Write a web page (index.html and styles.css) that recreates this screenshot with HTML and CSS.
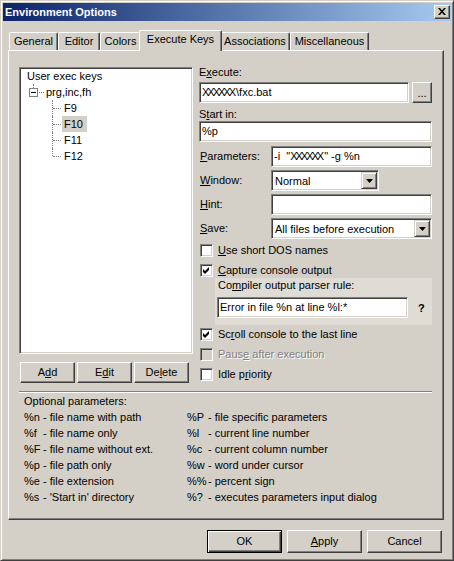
FILE: index.html
```html
<!DOCTYPE html>
<html>
<head>
<meta charset="utf-8">
<link rel="stylesheet" href="styles.css">
</head>
<body>
<div class="window">
  <div class="titlebar">
    <span class="title">Environment Options</span>
    <span class="close"><svg width="8" height="7" viewBox="0 0 8 7"><polygon points="0,0 2,0 8,7 6,7" fill="#000"/><polygon points="6,0 8,0 2,7 0,7" fill="#000"/></svg></span>
  </div>
  <div class="main">
    <div class="tabs">
      <div class="tab t-general">General</div>
      <div class="tab t-editor">Editor</div>
      <div class="tab t-colors">Colors</div>
      <div class="tab t-exec active">Execute Keys</div>
      <div class="tab t-assoc">Associations</div>
      <div class="tab t-misc">Miscellaneous</div>
    </div>
    <div class="page">
      <div class="top">
        <div class="left">
          <div class="tree sunken">
            <div class="tlist">
              <div class="trow root">User exec keys</div>
              <div class="trow parent"><span class="exp"><span class="minus"></span></span><span class="hdot"></span><span class="ttext">prg,inc,fh</span></div>
              <div class="trow child"><span class="conn"></span><span class="ttext">F9</span></div>
              <div class="trow child"><span class="conn"></span><span class="ttext sel">F10</span></div>
              <div class="trow child"><span class="conn"></span><span class="ttext">F11</span></div>
              <div class="trow child last"><span class="conn"></span><span class="ttext">F12</span></div>
            </div>
          </div>
          <div class="btnrow">
            <div class="btn small">A<u>d</u>d</div>
            <div class="btn small">E<u>d</u>it</div>
            <div class="btn small">De<u>l</u>ete</div>
          </div>
        </div>
        <div class="right">
          <div class="lbl first">E<u>x</u>ecute:</div>
          <div class="execrow">
            <div class="edit sunken exec-edit"><span class="mask">XXXXXX</span>\fxc.bat</div>
            <div class="btn dots">...</div>
          </div>
          <div class="lbl start">S<u>t</u>art in:</div>
          <div class="edit sunken">%p</div>
          <div class="fields">
            <div class="frow"><span class="flbl"><u>P</u>arameters:</span><div class="edit sunken wide">-i &nbsp;"<span class="mask">XXXXXX</span>" -g %n</div></div>
            <div class="frow"><span class="flbl"><u>W</u>indow:</span><div class="combo sunken narrow"><span class="ctext">Normal</span><span class="drop"><svg width="7" height="4" viewBox="0 0 7 4"><polygon points="0,0 7,0 3.5,4" fill="#000"/></svg></span></div></div>
            <div class="frow"><span class="flbl"><u>H</u>int:</span><div class="edit sunken wide"></div></div>
            <div class="frow"><span class="flbl"><u>S</u>ave:</span><div class="combo sunken wide"><span class="ctext">All files before execution</span><span class="drop"><svg width="7" height="4" viewBox="0 0 7 4"><polygon points="0,0 7,0 3.5,4" fill="#000"/></svg></span></div></div>
          </div>
          <div class="checks first-checks">
            <div class="chk"><span class="box"></span><span><u>U</u>se short DOS names</span></div>
            <div class="chk"><span class="box"><svg width="7" height="7" viewBox="0 0 7 7"><polygon points="0,2 2,4 6,0 6,3 2,7 0,5" fill="#000"/></svg></span><span><u>C</u>apture console output</span></div>
          </div>
          <div class="group">
            <div class="glbl">Co<u>m</u>piler output parser rule:</div>
            <div class="gline">
              <div class="edit sunken gedit">Error in file %n at line %l:*</div>
              <span class="q">?</span>
            </div>
          </div>
          <div class="checks second-checks">
            <div class="chk"><span class="box"><svg width="7" height="7" viewBox="0 0 7 7"><polygon points="0,2 2,4 6,0 6,3 2,7 0,5" fill="#000"/></svg></span><span>Sc<u>r</u>oll console to the last line</span></div>
            <div class="chk disabled"><span class="box"></span><span>Paus<u>e</u> after execution</span></div>
            <div class="chk"><span class="box"></span><span>Idle p<u>r</u>iority</span></div>
          </div>
        </div>
      </div>
      <div class="sep"></div>
      <div class="params">
        <div class="ptitle">Optional parameters:</div>
        <div class="pgrid">
          <div><span class="code">%n</span>- file name with path</div>
          <div><span class="code2">%P</span>- file specific parameters</div>
          <div><span class="code">%f</span>- file name only</div>
          <div><span class="code2">%l</span>- current line number</div>
          <div><span class="code">%F</span>- file name without ext.</div>
          <div><span class="code2">%c</span>- current column number</div>
          <div><span class="code">%p</span>- file path only</div>
          <div><span class="code2">%w</span>- word under cursor</div>
          <div><span class="code">%e</span>- file extension</div>
          <div><span class="code2">%%</span>- percent sign</div>
          <div><span class="code">%s</span>- 'Start in' directory</div>
          <div><span class="code2">%?</span>- executes parameters input dialog</div>
        </div>
      </div>
    </div>
    <div class="footer">
      <div class="btn big default">OK</div>
      <div class="btn big"><u>A</u>pply</div>
      <div class="btn big">Cancel</div>
    </div>
  </div>
</div>
</body>
</html>
```

FILE: styles.css
```css
* { box-sizing: border-box; }
html, body { margin: 0; padding: 0; }
body {
  width: 454px;
  height: 561px;
  overflow: hidden;
  background: #d4d0c8;
  font-family: "Liberation Sans", Arial, sans-serif;
  font-size: 11px;
  color: #000;
}
u { text-decoration: underline; text-underline-offset: 1px; }

.window {
  width: 454px;
  height: 561px;
  background: #d4d0c8;
  border: 1px solid;
  border-color: #d4d0c8 #404040 #404040 #d4d0c8;
  box-shadow: inset 1px 1px #fff, inset -1px -1px #808080;
  padding: 2px;
  display: flex;
  flex-direction: column;
}

.titlebar {
  height: 18px;
  background: linear-gradient(to right, #0a246a, #a6caf0);
  display: flex;
  align-items: center;
  justify-content: space-between;
  padding: 0 1px 0 2px;
}
.title {
  color: #fff;
  font-weight: bold;
  line-height: 13px;
}
.close {
  width: 16px;
  height: 14px;
  background: #d4d0c8;
  border: 1px solid;
  border-color: #fff #404040 #404040 #fff;
  box-shadow: inset -1px -1px #808080;
  display: flex;
  align-items: center;
  justify-content: center;
  padding-bottom: 1px;
}

.main {
  flex: 1;
  padding: 9px 7px 0 5px;
  display: flex;
  flex-direction: column;
}

.tabs {
  display: flex;
  height: 20px;
  padding-left: 1px;
  position: relative;
  z-index: 1;
}
.tab {
  margin-top: 2px;
  height: 18px;
  background: #d4d0c8;
  border-left: 1px solid #fff;
  border-top: 1px solid #fff;
  border-right: 1px solid #404040;
  box-shadow: inset -1px 0 #808080;
  border-radius: 2px 2px 0 0;
  text-align: center;
  line-height: 16px;
  white-space: nowrap;
}
.tab.active {
  margin-top: 0;
  height: 21px;
  margin-left: -2px;
  margin-right: -2px;
  position: relative;
  z-index: 2;
}
.t-general { width: 49px; }
.t-editor { width: 42px; }
.t-colors { width: 41px; }
.t-exec { width: 83px; }
.t-assoc { width: 70px; }
.t-misc { width: 79px; }

.page {
  width: 436px;
  height: 470px;
  border-top: 1px solid #fff;
  border-left: 1px solid #fff;
  border-right: 1px solid #404040;
  border-bottom: 1px solid #404040;
  box-shadow: inset -1px -1px #808080;
  padding: 16px 11px 0 10px;
}

.sunken {
  border: 1px solid;
  border-color: #808080 #fff #fff #808080;
  box-shadow: inset 1px 1px #404040, inset -1px -1px #d4d0c8;
  background: #fff;
}

.top {
  display: grid;
  grid-template-columns: 174px 233px;
  column-gap: 6px;
  align-items: start;
}

/* tree */
.tree {
  height: 287px;
  padding: 1px;
}
.tlist { margin-top: -1px; }
.trow {
  height: 16px;
  line-height: 16px;
  display: flex;
  align-items: center;
  white-space: nowrap;
}
.trow.root { padding-left: 6px; }
.exp {
  position: relative;
  width: 9px;
  height: 9px;
  margin-left: 8px;
  border: 1px solid #808080;
  background: #fff;
  display: flex;
  align-items: center;
  justify-content: center;
}
.exp::before {
  content: "";
  position: absolute;
  left: 3px;
  top: -5px;
  height: 4px;
  border-left: 1px dotted #808080;
}
.minus { width: 5px; height: 1px; background: #000; }
.hdot {
  width: 5px;
  margin-left: 1px;
  border-top: 1px dotted #808080;
}
.parent .ttext { margin-left: 2px; }
.conn {
  position: relative;
  width: 9px;
  height: 16px;
  margin-left: 31px;
}
.conn::before {
  content: "";
  position: absolute;
  left: 0;
  top: 0;
  bottom: 0;
  border-left: 1px dotted #808080;
}
.last .conn::before { bottom: 8px; }
.conn::after {
  content: "";
  position: absolute;
  left: 1px;
  top: 8px;
  width: 8px;
  border-top: 1px dotted #808080;
}
.child .ttext {
  margin-left: 1px;
  padding: 0 4px 0 2px;
  height: 16px;
}
.ttext.sel { background: #d4d0c8; }

/* buttons */
.btn {
  background: #d4d0c8;
  border: 1px solid;
  border-color: #fff #404040 #404040 #fff;
  box-shadow: inset -1px -1px #808080;
  text-align: center;
  white-space: nowrap;
}
.btnrow {
  display: flex;
  gap: 2px;
  margin-top: 8px;
  padding-left: 1px;
}
.btn.small { width: 55px; height: 21px; line-height: 19px; }
.btn.dots { width: 20px; height: 21px; line-height: 21px; }
.btn.big { width: 75px; height: 23px; line-height: 21px; }
.btn.default {
  border: 1px solid #000;
  box-shadow: inset 1px 1px #fff, inset -1px -1px #404040, inset -2px -2px #808080;
}

/* right column */
.lbl { line-height: 13px; }
.lbl.first { margin-top: -1px; }
.lbl.start { margin-top: 5px; }
.execrow {
  display: flex;
  gap: 3px;
  margin-top: 3px;
}
.edit {
  height: 21px;
  padding: 1px 2px;
  line-height: 16px;
  white-space: nowrap;
  overflow: hidden;
}
.exec-edit { width: 210px; }
.mask { letter-spacing: -2px; margin-right: 2px; }
.fields {
  display: flex;
  flex-direction: column;
  gap: 3px;
  margin-top: 4px;
}
.frow {
  display: flex;
  height: 21px;
}
.flbl {
  width: 72px;
  line-height: 21px;
  padding-left: 1px;
}
.wide { width: 161px; }
.narrow { width: 108px; }
.combo {
  height: 21px;
  padding: 1px;
  display: flex;
  white-space: nowrap;
}
.ctext {
  flex: 1;
  padding-left: 2px;
  line-height: 16px;
  padding-top: 1px;
}
.drop {
  width: 16px;
  height: 17px;
  background: #d4d0c8;
  border: 1px solid;
  border-color: #d4d0c8 #404040 #404040 #d4d0c8;
  box-shadow: inset 1px 1px #fff, inset -1px -1px #808080;
  display: flex;
  align-items: center;
  justify-content: center;
}

.checks {
  display: flex;
  flex-direction: column;
  gap: 7px;
}
.first-checks { margin-top: 5px; }
.second-checks { margin-top: 3px; }
.chk {
  display: flex;
  align-items: center;
  gap: 5px;
  height: 13px;
  line-height: 13px;
  margin-left: 1px;
  white-space: nowrap;
}
.box {
  width: 13px;
  height: 13px;
  border: 1px solid;
  border-color: #808080 #fff #fff #808080;
  box-shadow: inset 1px 1px #404040, inset -1px -1px #d4d0c8;
  background: #fff;
  display: flex;
  align-items: center;
  justify-content: center;
}
.chk.disabled { color: #808080; text-shadow: 1px 1px 0 #fff; }
.chk.disabled .box { background: #d4d0c8; }

.group {
  margin: 1px 0 0 16px;
  height: 47px;
  background: #dfdcd5;
  padding: 1px 0 0 2px;
}
.glbl { line-height: 13px; padding-left: 1px; }
.gline {
  display: flex;
  align-items: center;
  margin-top: 5px;
}
.gedit { width: 191px; }
.q { font-weight: bold; margin-left: 10px; }

.sep {
  margin-top: 8px;
  height: 2px;
  border-top: 1px solid #808080;
  border-bottom: 1px solid #fff;
}

.params {
  padding-left: 5px;
  line-height: 16px;
}
.pgrid {
  display: grid;
  grid-template-columns: 163px auto;
}
.pgrid > div { white-space: nowrap; }
.code { display: inline-block; width: 19px; }
.code2 { display: inline-block; width: 21px; }

.footer {
  display: flex;
  justify-content: flex-end;
  gap: 5px;
  margin-top: 10px;
  padding-right: 2px;
}
```
